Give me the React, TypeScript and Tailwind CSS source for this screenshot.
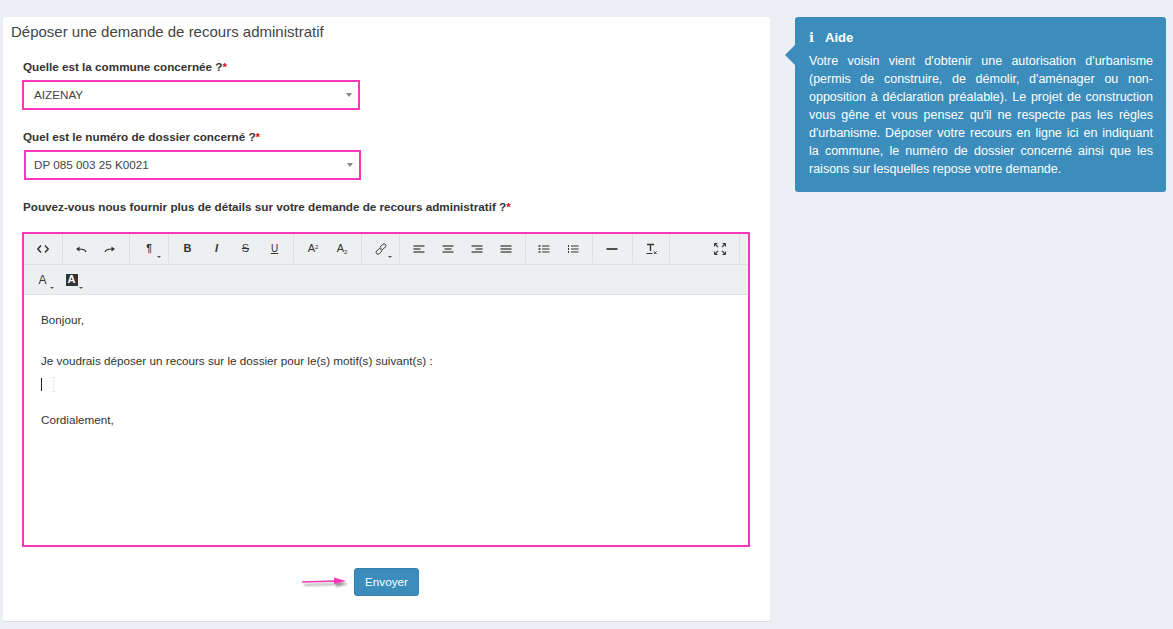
import type { ReactNode } from "react";

const font = { fontFamily: '"Liberation Sans", Arial, sans-serif' };

function Caret({ className = "" }: { className?: string }) {
  return <span className={"absolute border-x-[2px] border-t-[2px] border-x-transparent border-t-[#555] " + className} />;
}

function Ico({ children }: { children: ReactNode }) {
  return (
    <svg width="14" height="14" viewBox="0 0 14 14" fill="none" stroke="#333" strokeWidth="1.2">
      {children}
    </svg>
  );
}

function Btn({ children, caret }: { children: ReactNode; caret?: boolean }) {
  return (
    <div className="relative flex h-[29px] w-[29px] items-center justify-center text-[#333]">
      {children}
      {caret && <Caret className="bottom-[5px] right-[3px]" />}
    </div>
  );
}

function Group({ children, className = "" }: { children: ReactNode; className?: string }) {
  return <div className={"flex h-[29px] items-center justify-center border-r border-[#d9e0e0] " + className}>{children}</div>;
}

function Align({ rows }: { rows: [number, number][] }) {
  return (
    <Ico>
      {rows.map(([a, b], i) => (
        <line key={i} x1={a} x2={b} y1={4 + i * 3} y2={4 + i * 3} strokeWidth="1.200" />
      ))}
    </Ico>
  );
}

function Toolbar() {
  return (
    <div className="bg-[#ecf0f1]">
      <div className="flex h-[31px] items-start border-b border-[#dde3e3]">
        <Group className="w-[39px]">
          <Btn>
            <Ico>
              <path d="M5 3.500 1.800 7 5 10.500M9 3.500 12.200 7 9 10.500" strokeWidth="1.500" />
            </Ico>
          </Btn>
        </Group>
        <Group className="w-[67px] pr-[2px]">
          <Btn>
            <Ico>
              <path d="M12 10C11.500 8 9.500 7 5 7" strokeWidth="1.200" />
              <path d="M5.500 4.500 2 7l3.500 2.500z" fill="#333" stroke="none" />
            </Ico>
          </Btn>
          <Btn>
            <Ico>
              <path d="M2 10C2.500 8 4.500 7 9 7" strokeWidth="1.200" />
              <path d="M8.500 4.500 12 7 8.500 9.500z" fill="#333" stroke="none" />
            </Ico>
          </Btn>
        </Group>
        <Group className="w-[39px]">
          <Btn caret>
            <span className="text-[10px] font-bold">¶</span>
          </Btn>
        </Group>
        <Group className="w-[125px]">
          <Btn>
            <span className="text-[11px] font-bold">B</span>
          </Btn>
          <Btn>
            <span className="text-[11px] font-bold italic">I</span>
          </Btn>
          <Btn>
            <span className="text-[11px] line-through">S</span>
          </Btn>
          <Btn>
            <span className="text-[10px] underline">U</span>
          </Btn>
        </Group>
        <Group className="w-[68px]">
          <Btn>
            <span className="text-[11px]">
              A<sup className="text-[6px]">2</sup>
            </span>
          </Btn>
          <Btn>
            <span className="text-[11px]">
              A<sub className="text-[6px]">2</sub>
            </span>
          </Btn>
        </Group>
        <Group className="w-[38px]">
          <Btn caret>
            <Ico>
              <path d="M6 5.200 8.800 2.400a1.700 1.700 0 0 1 2.600 2.500L8.800 7.500a1.700 1.700 0 0 1-2.400 0M8 8.800l-2.700 2.800a1.700 1.700 0 0 1-2.700-2.500L5.200 6.500a1.700 1.700 0 0 1 2.400 0" strokeWidth="1" />
            </Ico>
          </Btn>
        </Group>
        <Group className="w-[126px]">
          <Btn>
            <Align rows={[[1.500, 12.500], [1.500, 8.500], [1.500, 12.500]]} />
          </Btn>
          <Btn>
            <Align rows={[[1.500, 12.500], [3.500, 10.500], [1.500, 12.500]]} />
          </Btn>
          <Btn>
            <Align rows={[[1.500, 12.500], [5.500, 12.500], [1.500, 12.500]]} />
          </Btn>
          <Btn>
            <Align rows={[[1.500, 12.500], [1.500, 12.500], [1.500, 12.500]]} />
          </Btn>
        </Group>
        <Group className="w-[67px] pr-[2px]">
          <Btn>
            <Ico>
              <path d="M1.500 4h2M1.500 7h2M1.500 10h2" strokeWidth="1.500" />
              <path d="M5 4h7.500M5 7h7.500M5 10h7.500" strokeWidth="1.100" />
            </Ico>
          </Btn>
          <Btn>
            <Ico>
              <path d="M2.500 3v2M2.500 6v2M2.500 9v2" strokeWidth="1" />
              <path d="M5 4h7.500M5 7h7.500M5 10h7.500" strokeWidth="1.100" />
            </Ico>
          </Btn>
        </Group>
        <Group className="w-[40px] pr-[2px]">
          <Btn>
            <Ico>
              <line x1="1.500" x2="12.500" y1="7" y2="7" strokeWidth="1.700" />
            </Ico>
          </Btn>
        </Group>
        <Group className="w-[37px]">
          <Btn>
            <Ico>
              <path d="M3 2.500h7M6.500 2.500v6.500" strokeWidth="1.400" />
              <path d="M2.500 11.500h6" strokeWidth="1" />
              <path d="M10 9.500l2.500 2.500M12.500 9.500 10 12" strokeWidth="1" />
            </Ico>
          </Btn>
        </Group>
        <Group className="w-[70px] justify-end pr-[5px]">
          <Btn>
            <Ico>
              <path d="M2 2l3 3M12 2 9 5M2 12l3-3M12 12 9 9" strokeWidth="1.100" />
              <path d="M1.500 4.500v-3h3M9.500 1.500h3v3M1.500 9.500v3h3M9.500 12.500h3v-3" strokeWidth="1" />
            </Ico>
          </Btn>
        </Group>
      </div>
      <div className="flex h-[30px] items-center border-b border-[#dde3e3] px-1">
        <Btn caret>
          <span className="text-[12px]">A</span>
        </Btn>
        <Btn caret>
          <span className="flex h-[12px] w-[12px] items-center justify-center bg-[#333] text-[11px] font-bold text-white">A</span>
        </Btn>
      </div>
    </div>
  );
}

function Label({ children }: { children: ReactNode }) {
  return (
    <label className="ml-px block text-[11.700px] font-bold leading-[17px] text-[#333]">
      {children}
      <span className="text-[#e01010]">*</span>
    </label>
  );
}

function Select({ value, className = "" }: { value: string; className?: string }) {
  return (
    <div className={"flex h-[30px] items-center justify-between border-[2px] border-[#fd37b9] bg-white pr-[6px] text-[11.700px] text-[#444] " + className}>
      <span>{value}</span>
      <span className="border-x-[3px] border-t-[4px] border-x-transparent border-t-[#888]" />
    </div>
  );
}

export default function App() {
  return (
    <div className="flex min-h-[629px] items-start bg-[#eceff4] pl-[3px] pt-[17px]" style={font}>
      <main className="h-[605px] w-[767px] rounded-[3px] border-b border-[#d8dade] bg-white">
        <h1 className="pl-[8px] pt-[6px] text-[15px] leading-[18px] text-[#444]">Déposer une demande de recours administratif</h1>

        <div className="pl-[19px] pr-[20px]">
          <div className="mt-[17px] w-[338px]">
            <Label>Quelle est la commune concernée ?</Label>
            <Select value="AIZENAY" className="mt-[5px] pl-[10px]" />
          </div>

          <div className="ml-[2px] mt-[18px] w-[337px]">
            <div className="-ml-[2px]">
              <Label>Quel est le numéro de dossier concerné ?</Label>
            </div>
            <Select value="DP 085 003 25 K0021" className="mt-[5px] pl-[8px]" />
          </div>

          <div className="mt-[18px]">
            <Label>Pouvez-vous nous fournir plus de détails sur votre demande de recours administratif ?</Label>
          </div>

          <div className="mt-[17px] h-[315px] w-[728px] border-[2px] border-[#fd37b9]">
            <Toolbar />
            <div className="px-[17px] pt-[16px] text-[11.700px] leading-[17px] text-[#333]">
              <p>Bonjour,</p>
              <p className="mt-[24px]">Je voudrais déposer un recours sur le dossier pour le(s) motif(s) suivant(s) :</p>
              <p className="mt-[7px] flex h-[17px] items-center gap-[9px]">
                <span className="h-[13px] w-px bg-[#222]" />
                <svg width="5" height="15" viewBox="0 0 5 15" fill="none" stroke="#eee" strokeWidth="1">
                  <path d="M0 .5h5M0 14.500h5M2.500 .5v14" />
                </svg>
              </p>
              <p className="mt-[18px]">Cordialement,</p>
            </div>
          </div>

          <div className="mt-[21px] flex justify-center pl-px">
            <div className="relative">
              <svg className="absolute -left-[54px] top-[5px] drop-shadow-[2px_3px_1px_rgba(0,0,0,0.4)]" width="50" height="16" viewBox="0 0 50 16" fill="none">
                <path d="M2 9 36 8" stroke="#fd37b9" strokeWidth="1.300" />
                <path d="M34 4.500 46 8 34 11z" fill="#fd37b9" />
              </svg>
              <button className="h-[28px] w-[65px] rounded-[3px] border border-[#367fa9] bg-[#3c8dbc] text-[11.700px] text-white">Envoyer</button>
            </div>
          </div>
        </div>
      </main>

      <aside className="relative ml-[25px] h-[175px] w-[371px] rounded-[3px] bg-[#3c8dbc] pl-[14px] pr-[13px] pt-[12px] text-white">
        <span className="absolute -left-[10px] top-[28px] border-y-[10px] border-r-[10px] border-y-transparent border-r-[#3c8dbc]" />
        <div className="flex items-center text-[13px] font-bold leading-[18px]">
          <span className="w-[16px] text-[13px]" style={{ fontFamily: '"DejaVu Serif", serif' }}>i</span>
          <span>Aide</span>
        </div>
        <p className="mt-[5px] text-justify text-[12.500px] leading-[18px]">
          Votre voisin vient d'obtenir une autorisation d'urbanisme (permis de construire, de démolir, d'aménager ou non-opposition à déclaration préalable). Le projet de construction vous gêne et vous pensez qu'il ne respecte pas les règles d'urbanisme. Déposer votre recours en ligne ici en indiquant la commune, le numéro de dossier concerné ainsi que les raisons sur lesquelles repose votre demande.
        </p>
      </aside>
    </div>
  );
}
